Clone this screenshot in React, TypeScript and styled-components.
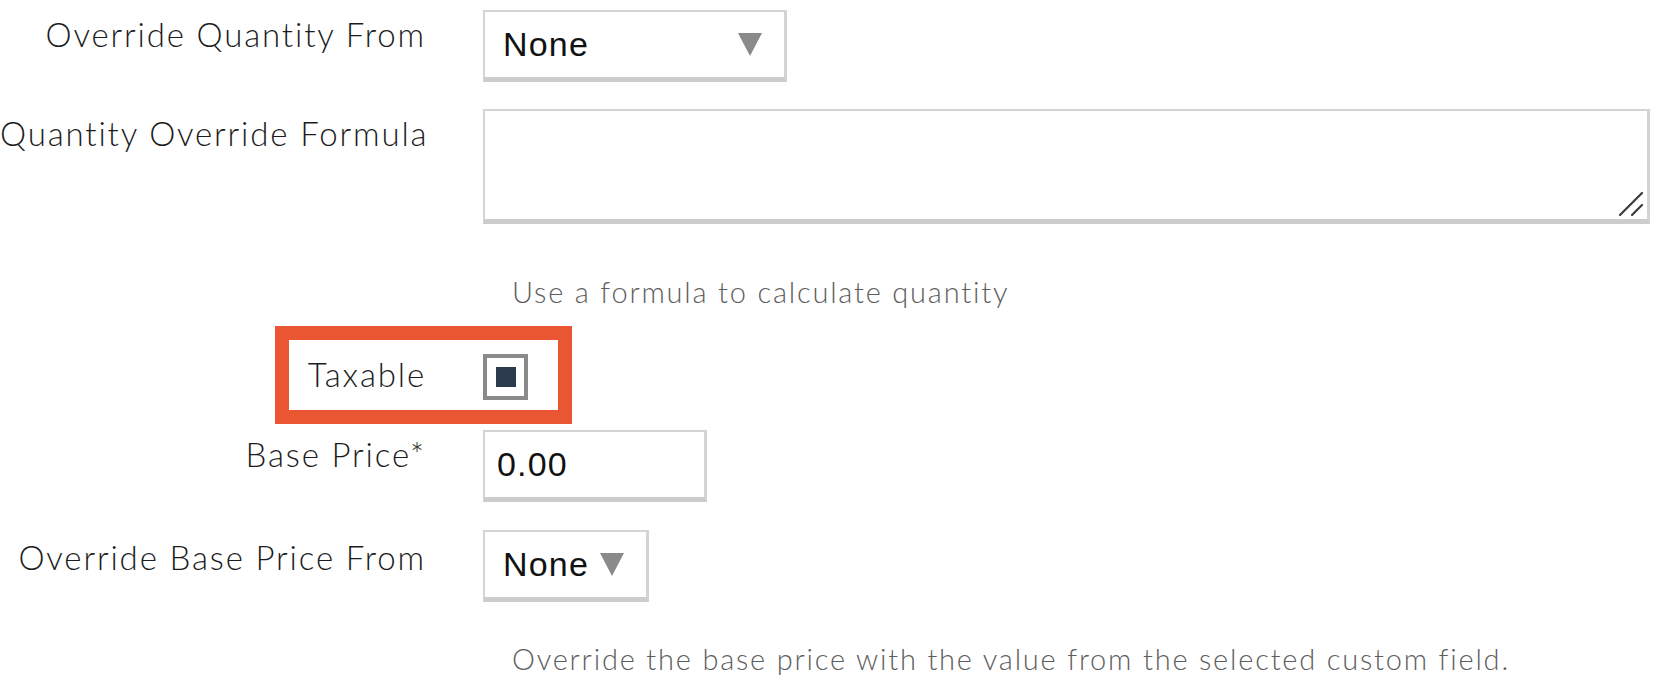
import React from "react";
import styled, { createGlobalStyle } from "styled-components";

const GlobalStyle = createGlobalStyle`
  html, body {
    margin: 0;
    padding: 0;
    background: #ffffff;
  }
  body {
    font-family: Lato, "Noto Sans", sans-serif;
    color: #333333;
  }
`;

const Page = styled.div`
  padding: 10px 8px 0 0;
`;

const Row = styled.div<{ $gap?: number }>`
  position: relative;
  display: grid;
  grid-template-columns: 426px 1fr;
  column-gap: 57px;
  align-items: start;
  margin-bottom: ${(p) => p.$gap ?? 0}px;
`;

const Label = styled.label<{ $offset?: number }>`
  display: block;
  text-align: right;
  font-size: 33px;
  font-weight: 300;
  letter-spacing: 1.85px;
  line-height: 40px;
  color: #1c1c1c;
  padding-top: ${(p) => p.$offset ?? 4}px;
  white-space: nowrap;
`;

const Field = styled.div`
  display: flex;
  flex-direction: column;
  align-items: flex-start;
`;

const boxBorder = `
  box-sizing: border-box;
  background: #ffffff;
  border: 2px solid #d4d4d4;
  border-right-width: 3px;
  border-bottom-width: 5px;
  border-bottom-color: #cccccc;
`;

const SelectBox = styled.div<{ $width?: number }>`
  ${boxBorder}
  display: inline-flex;
  align-items: center;
  justify-content: space-between;
  gap: 11px;
  height: 72px;
  width: ${(p) => (p.$width ? `${p.$width}px` : "auto")};
  padding: 0 22px 0 18px;
  font-family: "Liberation Sans", Arial, sans-serif;
  font-size: 34px;
  letter-spacing: 1.2px;
  color: #111111;
  cursor: default;
`;

const Arrow = styled.span`
  width: 0;
  height: 0;
  border-left: 12.5px solid transparent;
  border-right: 12.5px solid transparent;
  border-top: 23px solid #8a8a8a;
`;

const TextAreaWrap = styled.div`
  position: relative;
  width: 100%;
`;

const TextArea = styled.textarea`
  ${boxBorder}
  display: block;
  width: 100%;
  height: 115px;
  resize: none;
  outline: none;
  font-family: "Liberation Sans", Arial, sans-serif;
  font-size: 32px;
`;

const Grip = styled.svg`
  position: absolute;
  right: 6px;
  bottom: 7px;
  pointer-events: none;
`;

const Help = styled.p<{ $top: number }>`
  margin: ${(p) => p.$top}px 0 0;
  padding-left: 29px;
  font-size: 29px;
  font-weight: 300;
  letter-spacing: 1.8px;
  line-height: 36px;
  color: #5e5e5e;
  white-space: nowrap;
`;

const TextInput = styled.input`
  ${boxBorder}
  width: 224px;
  height: 72px;
  padding: 0 12px;
  outline: none;
  font-family: "Liberation Sans", Arial, sans-serif;
  font-size: 34px;
  letter-spacing: 1.2px;
  color: #111111;
`;

const Checkbox = styled.span`
  box-sizing: border-box;
  display: flex;
  align-items: center;
  justify-content: center;
  width: 45px;
  height: 46px;
  border: 4px solid #8a8a8a;
  background: #ffffff;
`;

const CheckMark = styled.span`
  width: 20px;
  height: 20px;
  background: #2b3a4c;
`;

const Highlight = styled.div`
  position: absolute;
  left: 275px;
  top: -28px;
  width: 297px;
  height: 98px;
  box-sizing: border-box;
  border: 14px solid #ea5532;
  pointer-events: none;
`;

export default function App() {
  return (
    <>
      <GlobalStyle />
      <Page>
        <Row $gap={27}>
          <Label $offset={4}>Override Quantity From</Label>
          <Field>
            <SelectBox $width={304}>
              <span>None</span>
              <Arrow />
            </SelectBox>
          </Field>
        </Row>

        <Row $gap={44}>
          <Label $offset={4}>Quantity Override Formula</Label>
          <Field>
            <TextAreaWrap>
              <TextArea />
              <Grip width="26" height="26" viewBox="0 0 26 26">
                <path
                  d="M2 24 L24 2 M14 24 L24 14"
                  stroke="#3a3a3a"
                  strokeWidth="2.2"
                  strokeLinecap="round"
                />
              </Grip>
            </TextAreaWrap>
            <Help $top={50}>Use a formula to calculate quantity</Help>
          </Field>
        </Row>

        <Row $gap={30}>
          <Label $offset={0}>Taxable</Label>
          <Field>
            <Checkbox role="checkbox" aria-checked="true">
              <CheckMark />
            </Checkbox>
          </Field>
          <Highlight />
        </Row>

        <Row $gap={28}>
          <Label $offset={4}>Base Price*</Label>
          <Field>
            <TextInput defaultValue="0.00" />
          </Field>
        </Row>

        <Row>
          <Label $offset={7}>Override Base Price From</Label>
          <Field>
            <SelectBox>
              <span>None</span>
              <Arrow />
            </SelectBox>
            <Help $top={39}>
              Override the base price with the value from the selected custom field.
            </Help>
          </Field>
        </Row>
      </Page>
    </>
  );
}
